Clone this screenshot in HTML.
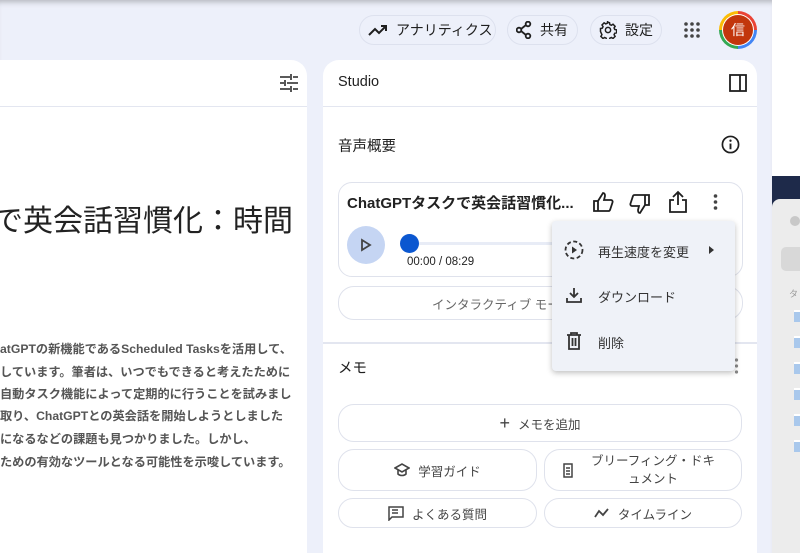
<!DOCTYPE html>
<html><head><meta charset="utf-8">
<style>
*{box-sizing:border-box;margin:0;padding:0}
body{width:800px;height:553px;overflow:hidden;background:#fff;font-family:"Liberation Sans","Noto Sans CJK JP",sans-serif;color:#1f1f1f;position:relative}
.bg{position:absolute;left:0;top:0;width:772px;height:553px;background:#edf0fa;box-shadow:inset 0 6px 6px -4px rgba(0,0,0,.25)}
.pill{position:absolute;top:15px;height:30px;border:1px solid #dde1ee;border-radius:15px;display:flex;align-items:center;font-size:14px;color:#1f1f1f;padding-left:8px}
.pill svg{margin-right:8px}
.panel{position:absolute;background:#fff;border-radius:16px 16px 0 0}
.hline{position:absolute;height:1px;background:#e3e6f0}
.btn{position:absolute;border:1px solid #dfe2ec;border-radius:16px;display:flex;align-items:center;justify-content:center;font-size:12.5px;color:#444;background:#fff}
.btn svg{margin-right:8px}
.para{position:absolute;left:0;font-size:12.2px;font-weight:bold;color:#555;white-space:nowrap}
</style></head><body>
<div class="bg"></div>

<div class="pill" style="left:359px;width:137px"><svg width="20" height="14" viewBox="0 0 20 14"><path d="M1 12l6-6 4 4 7-7M13 3h5v5" fill="none" stroke="#1f1f1f" stroke-width="2"/></svg>アナリティクス</div>
<div class="pill" style="left:507px;width:71px;padding-left:8px"><svg width="16" height="18" viewBox="0 0 16 18"><circle cx="12" cy="3" r="2.3" fill="none" stroke="#1f1f1f" stroke-width="1.8"/><circle cx="3" cy="9" r="2.3" fill="none" stroke="#1f1f1f" stroke-width="1.8"/><circle cx="12" cy="15" r="2.3" fill="none" stroke="#1f1f1f" stroke-width="1.8"/><path d="M5 8l5-4M5 10l5 4" stroke="#1f1f1f" stroke-width="1.8"/></svg>共有</div>
<div class="pill" style="left:590px;width:72px;padding-left:8px"><svg width="18" height="18" viewBox="0 0 24 24"><path d="M12 2l2 .3.5 2.5 2 .9 2.2-1.4 2.8 2.8-1.4 2.2.9 2 2.5.5v4l-2.5.5-.9 2 1.4 2.2-2.8 2.8-2.2-1.4-2 .9-.5 2.5h-4l-.5-2.5-2-.9-2.2 1.4-2.8-2.8 1.4-2.2-.9-2L2 14v-4l2.5-.5.9-2L4 5.3 6.8 2.5 9 3.9l2-.9.5-2.5z" fill="none" stroke="#1f1f1f" stroke-width="2"/><circle cx="12" cy="12" r="3.5" fill="none" stroke="#1f1f1f" stroke-width="2"/></svg>設定</div>
<svg style="position:absolute;left:684px;top:22px" width="16" height="16" viewBox="0 0 16 16" fill="#444"><circle cx="2" cy="2" r="1.8"/><circle cx="8" cy="2" r="1.8"/><circle cx="14" cy="2" r="1.8"/><circle cx="2" cy="8" r="1.8"/><circle cx="8" cy="8" r="1.8"/><circle cx="14" cy="8" r="1.8"/><circle cx="2" cy="14" r="1.8"/><circle cx="8" cy="14" r="1.8"/><circle cx="14" cy="14" r="1.8"/></svg>
<div style="position:absolute;left:719px;top:11px;width:38px;height:38px;border-radius:50%;background:conic-gradient(#ea4335 0 25%,#4285f4 25% 50%,#34a853 50% 75%,#fbbc05 75% 100%)"></div>
<div style="position:absolute;left:722px;top:14px;width:32px;height:32px;border-radius:50%;background:#fff"></div>
<div style="position:absolute;left:723px;top:15px;width:30px;height:30px;border-radius:50%;background:#c2360c;color:#fff;font-size:14px;display:flex;align-items:center;justify-content:center">信</div>

<div class="panel" style="left:0;top:60px;width:307px;height:493px;border-radius:0 16px 0 0"></div>
<div class="hline" style="left:0;top:106px;width:307px"></div>
<svg style="position:absolute;left:280px;top:74px" width="18" height="18" viewBox="0 0 18 18"><path d="M0 3h10M13 3h5M0 9h4M7 9h11M0 15h10M13 15h5M11 0v6M5 6v6M11 12v6" stroke="#444" stroke-width="1.8"/></svg>
<div style="position:absolute;left:-7px;top:196px;font-size:30px;color:#222;white-space:nowrap">で英会話習慣化：時間</div>
<div class="para" style="top:339px">atGPTの新機能であるScheduled Tasksを活用して、</div>
<div class="para" style="top:362px">しています。筆者は、いつでもできると考えたために</div>
<div class="para" style="top:384px">自動タスク機能によって定期的に行うことを試みまし</div>
<div class="para" style="top:406px">取り、ChatGPTとの英会話を開始しようとしました</div>
<div class="para" style="top:429px">になるなどの課題も見つかりました。しかし、</div>
<div class="para" style="top:452px">ための有効なツールとなる可能性を示唆しています。</div>

<div class="panel" style="left:323px;top:60px;width:434px;height:493px"></div>
<div style="position:absolute;left:338px;top:74px;font-size:14.5px">Studio</div>
<svg style="position:absolute;left:729px;top:74px" width="18" height="18" viewBox="0 0 18 18"><rect x="1" y="1" width="16" height="16" fill="none" stroke="#1f1f1f" stroke-width="1.8"/><path d="M11 1v16" stroke="#1f1f1f" stroke-width="1.8"/></svg>
<div class="hline" style="left:323px;top:106px;width:434px"></div>
<div style="position:absolute;left:338px;top:135px;font-size:14.5px">音声概要</div>
<svg style="position:absolute;left:721px;top:135px" width="19" height="19" viewBox="0 0 20 20"><circle cx="10" cy="10" r="8.5" fill="none" stroke="#1f1f1f" stroke-width="1.8"/><path d="M10 9v6" stroke="#1f1f1f" stroke-width="2"/><circle cx="10" cy="6" r="1.2" fill="#1f1f1f"/></svg>

<div style="position:absolute;left:338px;top:182px;width:405px;height:95px;border:1px solid #dfe2ec;border-radius:14px"></div>
<div style="position:absolute;left:347px;top:192px;font-size:15px;font-weight:bold;color:#222;white-space:nowrap">ChatGPTタスクで英会話習慣化...</div>
<svg style="position:absolute;left:592px;top:191px" width="22" height="22" viewBox="0 0 22 22"><path d="M2 10h4v10H2zM6 10l5-8c2 0 2 2 2 3l-1 4h7c1 0 2 1 1.5 2.5L18 19c-.3.7-1 1-1.5 1H6" fill="none" stroke="#1f1f1f" stroke-width="1.8"/></svg>
<svg style="position:absolute;left:629px;top:193px" width="22" height="22" viewBox="0 0 22 22"><path d="M20 12h-4V2h4zM16 12l-5 8c-2 0-2-2-2-3l1-4H3c-1 0-2-1-1.5-2.5L4 3c.3-.7 1-1 1.5-1H16" fill="none" stroke="#1f1f1f" stroke-width="1.8"/></svg>
<svg style="position:absolute;left:668px;top:190px" width="20" height="23" viewBox="0 0 20 23"><path d="M10 15V2M5 7l5-5 5 5M6 10H2v12h16V10h-4" fill="none" stroke="#1f1f1f" stroke-width="1.8"/></svg>
<svg style="position:absolute;left:713px;top:194px" width="5" height="16" viewBox="0 0 5 16" fill="#444"><circle cx="2.5" cy="2" r="1.8"/><circle cx="2.5" cy="8" r="1.8"/><circle cx="2.5" cy="14" r="1.8"/></svg>
<div style="position:absolute;left:347px;top:226px;width:38px;height:38px;border-radius:50%;background:#c5d5f3"></div>
<svg style="position:absolute;left:360px;top:238px" width="12" height="14" viewBox="0 0 12 14"><path d="M2 2l8 5-8 5z" fill="none" stroke="#444" stroke-width="1.8"/></svg>
<div style="position:absolute;left:409px;top:242px;width:145px;height:3px;background:#e8ecf6"></div>
<div style="position:absolute;left:400px;top:234px;width:19px;height:19px;border-radius:50%;background:#0b57d0"></div>
<div style="position:absolute;left:407px;top:256px;font-size:11.5px;color:#222">00:00 / 08:29</div>

<div class="btn" style="left:338px;top:286px;width:405px;height:34px;justify-content:flex-start;padding-left:93px;color:#666">インタラクティブ モード</div>

<div class="hline" style="left:323px;top:342px;width:434px;height:2px"></div>
<div style="position:absolute;left:338px;top:357px;font-size:14.5px">メモ</div>
<svg style="position:absolute;left:734px;top:358px" width="5" height="16" viewBox="0 0 5 16" fill="#888"><circle cx="2.5" cy="2" r="1.6"/><circle cx="2.5" cy="8" r="1.6"/><circle cx="2.5" cy="14" r="1.6"/></svg>

<div class="btn" style="left:338px;top:404px;width:404px;height:38px"><span style="font-size:18px;margin-right:8px;color:#444">+</span>メモを追加</div>
<div class="btn" style="left:338px;top:449px;width:199px;height:42px"><svg width="16" height="14" viewBox="0 0 16 14"><path d="M1 5l7-4 7 4-7 4zM4 7v4c2 2 6 2 8 0V7" fill="none" stroke="#444" stroke-width="1.6"/></svg>学習ガイド</div>
<div class="btn" style="left:544px;top:449px;width:198px;height:42px;line-height:18px"><svg style="position:absolute;left:18px;top:13px" width="12" height="15" viewBox="0 0 12 15"><path d="M1 1h8v13H1z M3 5h4M3 8h4M3 11h4" fill="none" stroke="#444" stroke-width="1.5"/></svg><span style="text-align:center;margin-left:20px">ブリーフィング・ドキ<br>ュメント</span></div>
<div class="btn" style="left:338px;top:498px;width:199px;height:30px"><svg width="16" height="15" viewBox="0 0 16 15"><path d="M1 1h14v10H4l-3 3z M4 4h6M4 7h6" fill="none" stroke="#444" stroke-width="1.5"/></svg>よくある質問</div>
<div class="btn" style="left:544px;top:498px;width:198px;height:30px"><svg width="16" height="10" viewBox="0 0 16 10"><path d="M1 9l4-6 4 4 5-6" fill="none" stroke="#444" stroke-width="1.8"/></svg>タイムライン</div>

<div style="position:absolute;left:552px;top:221px;width:183px;height:150px;background:#eff2f8;border-radius:4px;box-shadow:0 2px 6px rgba(0,0,0,.25)"></div>
<svg style="position:absolute;left:564px;top:240px" width="20" height="20" viewBox="0 0 20 20"><circle cx="10" cy="10" r="8.5" fill="none" stroke="#333" stroke-width="1.8" stroke-dasharray="4 2.5"/><path d="M8 6.5l5 3.5-5 3.5z" fill="#333"/></svg>
<div style="position:absolute;left:598px;top:242px;font-size:13px;color:#333">再生速度を変更</div>
<div style="position:absolute;left:709px;top:246px;width:0;height:0;border-left:5px solid #333;border-top:4px solid transparent;border-bottom:4px solid transparent"></div>
<svg style="position:absolute;left:566px;top:287px" width="16" height="16" viewBox="0 0 16 16"><path d="M8 1v9M4 6l4 4 4-4M1 11v4h14v-4" fill="none" stroke="#333" stroke-width="1.8"/></svg>
<div style="position:absolute;left:598px;top:287px;font-size:13px;color:#333">ダウンロード</div>
<svg style="position:absolute;left:566px;top:332px" width="16" height="18" viewBox="0 0 16 18"><path d="M1 3h14M5 3V1h6v2M3 3v14h10V3M6.5 6v8M9.5 6v8" fill="none" stroke="#333" stroke-width="1.8"/></svg>
<div style="position:absolute;left:598px;top:333px;font-size:13px;color:#333">削除</div>

<div style="position:absolute;left:772px;top:176px;width:28px;height:377px;background:#1e2a4a"></div>
<div style="position:absolute;left:772px;top:199px;width:28px;height:354px;background:#ececec;border-radius:8px 0 0 0"></div>
<div style="position:absolute;left:790px;top:216px;width:10px;height:10px;border-radius:50%;background:#c8c8c8"></div>
<div style="position:absolute;left:781px;top:247px;width:19px;height:24px;border-radius:5px 0 0 5px;background:#d8d8d8"></div>
<div style="position:absolute;left:789px;top:287px;font-size:9px;color:#999">タ</div>
<div style="position:absolute;left:794px;top:310px;width:6px;height:150px;background:repeating-linear-gradient(#fff 0,#fff 2px,#a9c8ec 2px,#a9c8ec 12px,#ececec 12px,#ececec 26px)"></div>
</body></html>
